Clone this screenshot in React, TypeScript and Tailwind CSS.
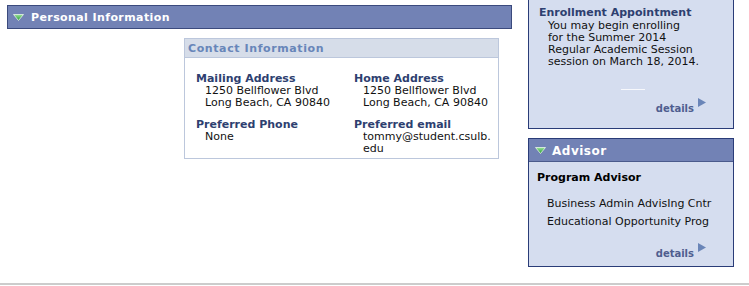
import React from "react"

const font = "font-['DejaVu_Sans',Verdana,sans-serif]"

function GreenArrow() {
  return (
    <svg width="11" height="7" viewBox="0 0 11 7" className="shrink-0">
      <defs>
        <linearGradient id="ga" x1="0" y1="0" x2="0" y2="1">
          <stop offset="0" stopColor="#9be39b" />
          <stop offset="1" stopColor="#1f9a2e" />
        </linearGradient>
      </defs>
      <polygon points="0.5,0.5 10.5,0.5 5.5,6.5" fill="url(#ga)" stroke="#e8f5e8" strokeWidth="0.8" />
    </svg>
  )
}

function Details() {
  return (
    <div className="flex justify-end items-start pr-[27px] gap-[4px]">
      <span className="text-[10px] font-bold text-[#4f5d8f] leading-none mt-[6px]">details</span>
      <svg width="8" height="9" viewBox="0 0 8 9">
        <polygon points="0,0 8,4.5 0,9" fill="#6a85b8" />
      </svg>
    </div>
  )
}

export default function App() {
  return (
    <div className={`${font} w-[749px] h-[286px] bg-white flex flex-col`}>
      <div className="flex flex-1">
        {/* left: personal information */}
        <div className="w-[528px] pl-[7px] pt-[5px]">
          <div className="w-[505px] h-[24px] bg-[#7282b5] border border-[#3b4a7d] flex items-center gap-[7px] pl-[5px]">
            <GreenArrow />
            <span className="text-white text-[11px] font-bold tracking-[0.4px] mt-[3px]">Personal Information</span>
          </div>

          <div className="ml-[177px] mt-[9px] w-[315px] border border-[#bcc7dc]">
            <div className="h-[19px] bg-[#d6dde9] border-b border-[#bcc7dc] flex items-center pl-[3px]">
              <span className="text-[11px] font-bold text-[#6886b9] tracking-[0.6px] mt-[2px]">Contact Information</span>
            </div>
            <div className="grid grid-cols-[158px_1fr] pl-[11px] pt-[15px] pb-[3px] text-[11px] leading-[12px]">
              <div>
                <div className="font-bold text-[#2e3f70]">Mailing Address</div>
                <div className="pl-[9px] text-[#111]">1250 Bellflower Blvd</div>
                <div className="pl-[9px] text-[#111]">Long Beach, CA 90840</div>
              </div>
              <div>
                <div className="font-bold text-[#2e3f70]">Home Address</div>
                <div className="pl-[9px] text-[#111]">1250 Bellflower Blvd</div>
                <div className="pl-[9px] text-[#111]">Long Beach, CA 90840</div>
              </div>
              <div className="mt-[10px]">
                <div className="font-bold text-[#2e3f70]">Preferred Phone</div>
                <div className="pl-[9px] text-[#111]">None</div>
              </div>
              <div className="mt-[10px]">
                <div className="font-bold text-[#2e3f70]">Preferred email</div>
                <div className="pl-[9px] text-[#111] w-[140px] break-all">tommy@student.csulb.edu</div>
              </div>
            </div>
          </div>
        </div>

        {/* right column */}
        <div className="w-[206px] flex flex-col">
          <div className="h-[129px] bg-[#d5ddef] border border-t-0 border-[#2a3c78] pl-[10px] pt-[7px] flex flex-col">
            <div className="text-[11px] font-bold text-[#2e3f70] leading-[12px]">Enrollment Appointment</div>
            <div className="pl-[9px] pt-[1px] text-[11px] text-[#111] leading-[12px]">
              You may begin enrolling<br />
              for the Summer 2014<br />
              Regular Academic Session<br />
              session on March 18, 2014.
            </div>
            <div className="ml-[82px] mt-[21px] w-[24px] h-px bg-white/80" />
            <div className="mt-[8px]">
              <Details />
            </div>
          </div>

          <div className="mt-[9px] h-[129px] bg-[#d5ddef] border border-[#2a3c78] flex flex-col">
            <div className="h-[23px] bg-[#7282b5] border-b border-[#4a5a8c] flex items-center gap-[6px] pl-[6px]">
              <GreenArrow />
              <span className="text-white text-[12px] font-bold tracking-[0.5px] mt-[2px]">Advisor</span>
            </div>
            <div className="pl-[8px] pt-[10px] text-[11px] font-bold text-black leading-[12px]">Program Advisor</div>
            <div className="pl-[18px] pt-[11px] text-[11px] text-[#111] leading-[18px]">
              <div>Business Admin AdvisIng Cntr</div>
              <div>Educational Opportunity Prog</div>
            </div>
            <div className="mt-[12px]">
              <Details />
            </div>
          </div>
        </div>
      </div>
      <div className="h-[2px] bg-[#cccccc] mb-[1px]" />
    </div>
  )
}
